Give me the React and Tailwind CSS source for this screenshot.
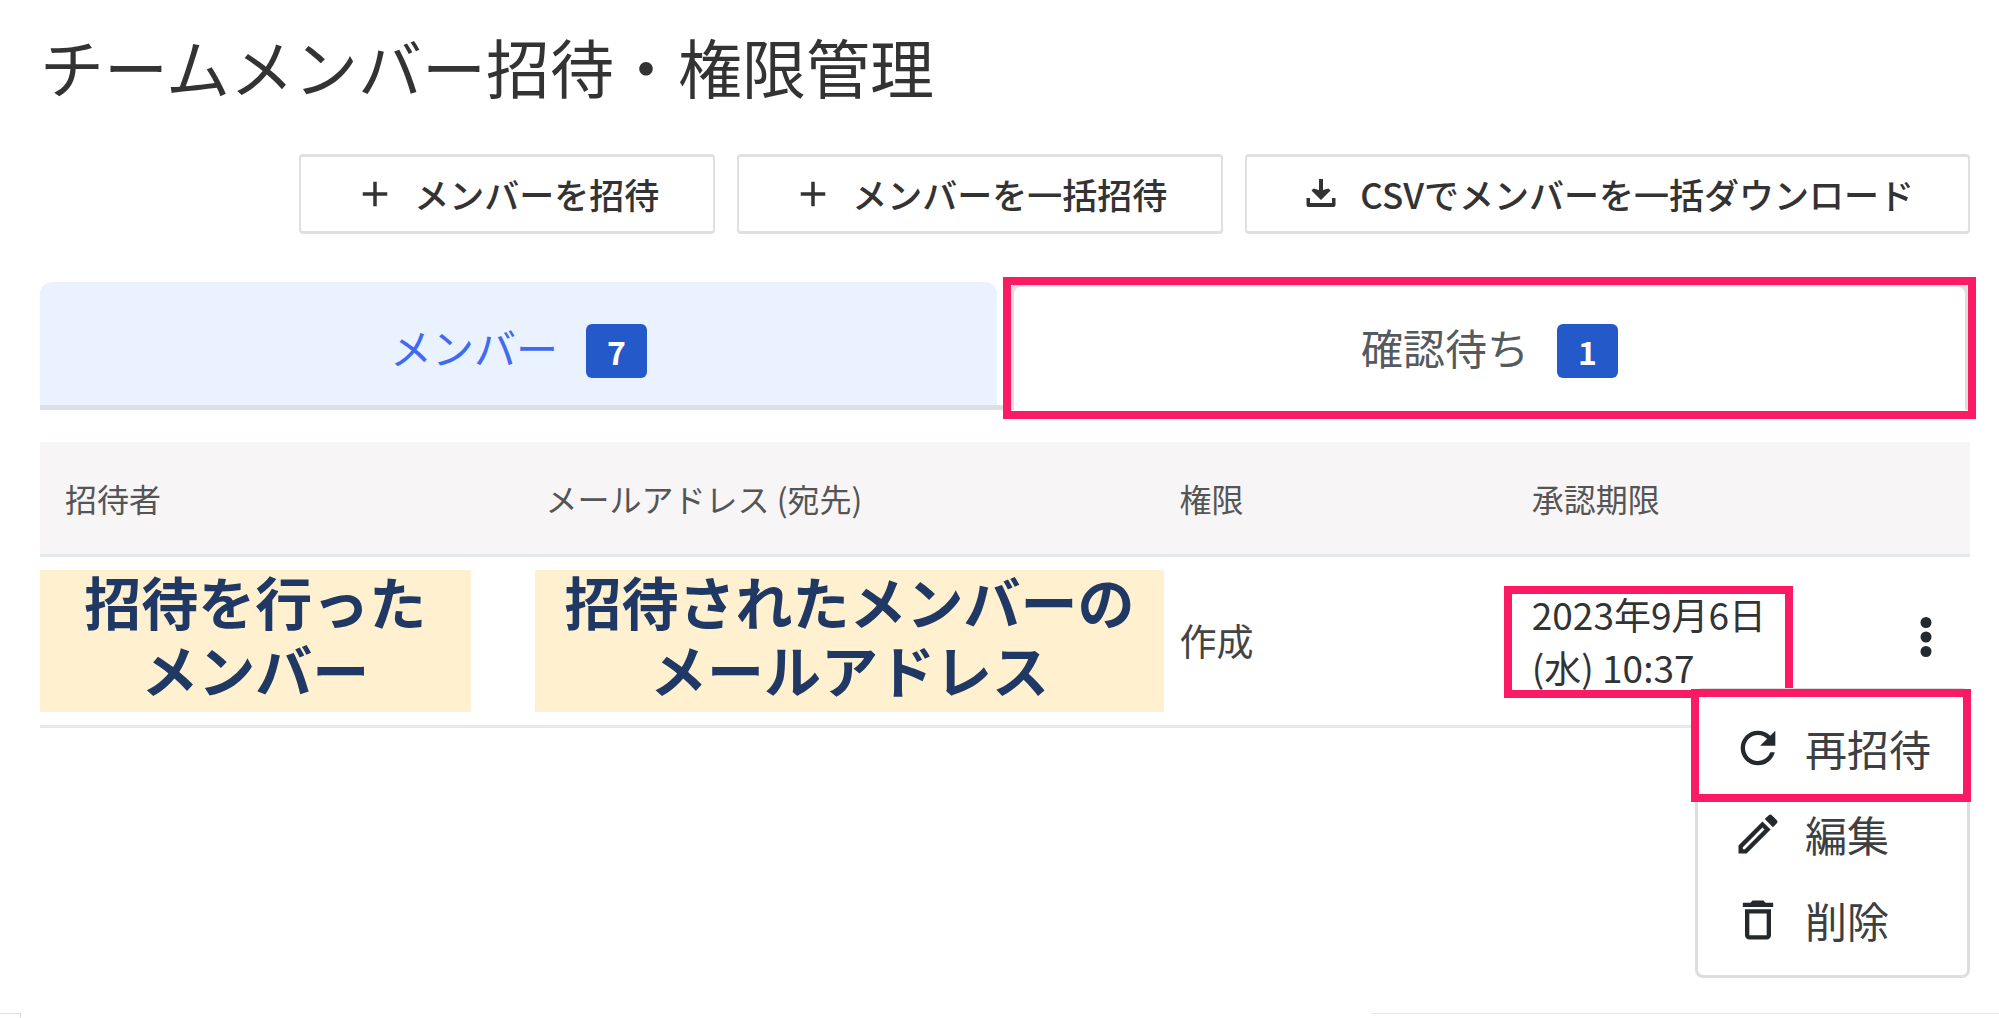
import { MdAdd, MdRefresh, MdOutlineEdit, MdDeleteOutline } from "react-icons/md";

const HIGHLIGHT = "border-8 border-[#fb1a64]";

function DownloadIcon({ className }) {
  return (
    <svg viewBox="0 0 42 42" className={className} fill="currentColor" aria-hidden="true">
      <path d="M19 6h4v11l5.5-1.5 2 2L21 27l-9.500-9.500 2-2L19 17z" />
      <path d="M6.500 25H10v5h22v-5h3.500v7a2 2 0 0 1-2 2h-25a2 2 0 0 1-2-2z" />
    </svg>
  );
}

function ActionButton({ icon: Icon, children }) {
  return (
    <button
      type="button"
      className="flex h-20 items-center gap-[18px] rounded-[4px] border-x-2 border-y-3 border-[#e0e0e0] bg-white pr-[54px] pl-[53px] text-[35px] leading-[48px] font-medium text-[#333]"
    >
      <Icon className="size-[42px]" />
      <span>{children}</span>
    </button>
  );
}

function Badge({ children }) {
  return (
    <span className="flex h-[54px] w-[61px] items-center justify-center rounded-md bg-[#2459c9] text-[32px] leading-[48px] font-bold text-white">
      {children}
    </span>
  );
}

function MenuItem({ icon: Icon, children }) {
  return (
    <li>
      <button type="button" role="menuitem" className="flex h-[86px] w-full items-center gap-[21px] pl-[34px] text-[42px] text-[#3c4043]">
        <Icon className="size-[52px] text-[#24292e]" />
        <span>{children}</span>
      </button>
    </li>
  );
}

function Note({ children }) {
  return (
    <div className="flex h-[142px] justify-center bg-[#fff1cf] text-center text-[57px] leading-[68px] font-bold whitespace-nowrap text-[#203864]">
      <p className="-mt-1">{children}</p>
    </div>
  );
}

export default function App() {
  return (
    <div className="flex min-h-screen flex-col overflow-hidden bg-white font-['Noto_Sans_CJK_JP',sans-serif] text-[#333]">
      <main className="grow pt-5 pr-[29px] pl-10">
        <h1 className="text-[64px] leading-[90px]">チームメンバー招待・権限管理</h1>

        <div className="mt-11 flex justify-end gap-[22px]">
          <ActionButton icon={MdAdd}>メンバーを招待</ActionButton>
          <ActionButton icon={MdAdd}>メンバーを一括招待</ActionButton>
          <ActionButton icon={DownloadIcon}>CSVでメンバーを一括ダウンロード</ActionButton>
        </div>

        <div role="tablist" className="mt-12 grid h-32 grid-cols-2">
          <div className="border-b-5 border-[#dcdfe4] pr-2">
            <button
              type="button"
              role="tab"
              aria-selected="false"
              className="flex h-full w-full items-center justify-center gap-7 rounded-t-xl bg-[#eaf2ff] pt-[14px] text-[42px] leading-[60px] text-[#3f6bf0]"
            >
              <span className="-mt-2">メンバー</span>
              <Badge>7</Badge>
            </button>
          </div>
          <div className="relative pl-1">
            <button
              type="button"
              role="tab"
              aria-selected="true"
              className="flex h-full w-full items-center justify-center gap-7 rounded-t-xl border-x-5 border-t-5 border-[#dcdfe4] bg-white pt-2 pb-1 text-[42px] leading-[60px] text-[#555a5e]"
            >
              <span className="-mt-2">確認待ち</span>
              <Badge>1</Badge>
            </button>
            <div className={`pointer-events-none absolute -top-[5px] -right-[6px] -bottom-[9px] -left-[2px] ${HIGHLIGHT}`} />
          </div>
        </div>

        <table className="mt-8 w-full table-fixed border-collapse text-left">
          <colgroup>
            <col className="w-[25%]" />
            <col className="w-[33%]" />
            <col className="w-[18%]" />
            <col className="w-[18%]" />
            <col className="w-[6%]" />
          </colgroup>
          <thead className="bg-[#f7f5f6] text-[32px] text-[#555]">
            <tr className="h-[113px] border-b-3 border-[#e6eaee]">
              <th className="pl-[25px] font-normal">招待者</th>
              <th className="pl-[23px] font-normal">メールアドレス (宛先)</th>
              <th className="pl-5 font-normal">権限</th>
              <th className="pl-[25px] font-normal">承認期限</th>
              <th aria-label="操作" />
            </tr>
          </thead>
          <tbody className="text-[37px] leading-[53px]">
            <tr className="h-[171px] border-b-3 border-[#e6eaee]">
              <td className="pr-[52px]">
                <Note>招待を行った<br />メンバー</Note>
              </td>
              <td className="pl-3">
                <div className="-mr-[5px]">
                  <Note>招待されたメンバーの<br />メールアドレス</Note>
                </div>
              </td>
              <td className="pl-5 text-[#444]">作成</td>
              <td className="pl-[25px]">
                <div className="relative">
                  2023年9月6日<br />(水) 10:37
                  <div className={`pointer-events-none absolute -top-[2px] -left-7 h-28 w-[289px] ${HIGHLIGHT}`} />
                </div>
              </td>
              <td>
                <div className="relative flex justify-end pr-[26px] pb-2">
                  <button type="button" aria-label="メニュー" aria-haspopup="menu" aria-expanded="true">
                    <svg viewBox="0 0 36 48" className="h-12 w-9 fill-[#24292e]">
                      <circle cx="18" cy="9.5" r="5.5" />
                      <circle cx="18" cy="24" r="5.5" />
                      <circle cx="18" cy="38.5" r="5.5" />
                    </svg>
                  </button>
                  <div className="absolute top-[75px] right-0 w-[275px] rounded-lg border-3 border-[#dddddd] bg-white">
                    <ul role="menu" className="pt-[14px] pb-[12px]">
                      <MenuItem icon={MdRefresh}>再招待</MenuItem>
                      <MenuItem icon={MdOutlineEdit}>編集</MenuItem>
                      <MenuItem icon={MdDeleteOutline}>削除</MenuItem>
                    </ul>
                    <div className={`pointer-events-none absolute -top-[2px] -right-1 -left-[7px] h-[113px] ${HIGHLIGHT}`} />
                  </div>
                </div>
              </td>
            </tr>
          </tbody>
        </table>
      </main>

      <footer className="flex h-[5px] justify-between">
        <div className="w-[21px] border-t border-r border-[#dddddd]" />
        <div className="w-[627px] border-t border-[#e8e8e8]" />
      </footer>
    </div>
  );
}
